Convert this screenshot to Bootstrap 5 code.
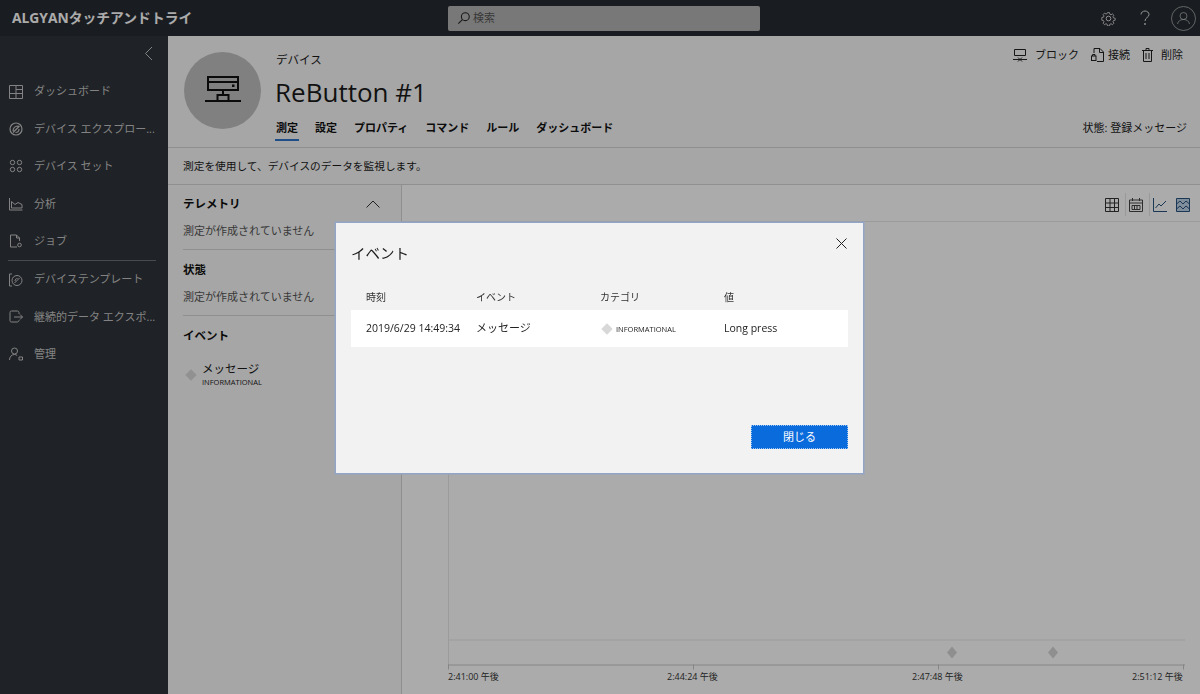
<!DOCTYPE html>
<html lang="ja">
<head>
    <meta charset="UTF-8">
    <meta name="viewport" content="width=device-width, initial-scale=1.0">
    <title>ReButton #1</title>
    <link href="https://cdn.jsdelivr.net/npm/bootstrap@5.3.0/dist/css/bootstrap.min.css" rel="stylesheet">
    <style>
        html, body { height: 100%; overflow: hidden; }
        body {
            font-family: "Open Sans", "Noto Sans CJK JP", sans-serif;
            font-size: 11px;
            color: #1a1a1a;
            background: #f8f8f8;
        }
        svg { display: block; }
        .app-top { height: 36px; background: #262a30; padding: 0 4px 0 12px; flex-wrap: nowrap; }
        .app-brand { color: #fff; font-size: 13.8px; font-weight: 700; width: 436px; white-space: nowrap; }
        .app-search { width: 312px; height: 25px; background: #b4b4b4; border-radius: 2px; padding: 0 9px; color: #555; font-size: 11px; gap: 2px; }
        .app-top-icons { margin-left: auto; color: #ddd; gap: 20px; }
        .top-gear { margin-right: 3px; }
        .top-user { stroke-opacity: .6; }
        .app-body { height: 658px; }
        .app-side { width: 168px; flex: none; background: #2f3339; color: #c4c4c4; }
        .side-toggle { height: 37px; padding: 0 15px 2px 0; }
        .side-nav .nav-link { height: 37.4px; padding: 0 9px; color: #c4c4c4; font-size: 11px; gap: 11px; white-space: nowrap; }
        .side-rule { height: 1px; background: #6d6f73; margin: 0 12px 0 8px; }
        .app-main { background: #f8f8f8; min-width: 0; }
        .dev-head { height: 112px; border-bottom: 1px solid #d6d6d6; padding: 16px 13px 0 16px; }
        .dev-avatar { width: 77px; height: 77px; border-radius: 50%; background: #bfbfbf; color: #111; flex: none; }
        .dev-info { margin-left: 14px; }
        .dev-kicker { font-size: 11.5px; line-height: 16px; margin-bottom: 6px; padding-left: 1px; }
        .dev-title { font-size: 26px; line-height: 36px; font-weight: 400; margin: 0 0 10px; }
        .dev-tabs { gap: 15px; }
        .dev-tabs .nav-link { padding: 0 1px 3px; color: #111; font-weight: 700; font-size: 11px; line-height: 16px; border-bottom: 2px solid transparent; }
        .dev-tabs .nav-link.active { border-bottom-color: #2f74c9; }
        .dev-actions { gap: 12px; color: #222; margin: -5px 4px 0 0; }
        .dev-status { font-size: 11px; margin-top: 56px; }
        .dev-note { height: 37px; padding: 0 15px; border-bottom: 1px solid #d6d6d6; font-size: 10.7px; }
        .meas-col { width: 234px; flex: none; padding: 0 15px; border-right: 1px solid #d6d6d6; }
        .meas-sec { border-bottom: 1px solid #d6d6d6; height: 66px; padding-top: 11px; }
        .meas-sec:first-child { height: 65px; padding-top: 10px; }
        .meas-name { font-weight: 700; font-size: 11.5px; line-height: 18px; margin-bottom: 10px; color: #111; }
        .meas-empty { color: #555; font-size: 11px; line-height: 16px; }
        .meas-gap { margin-top: 10px; }
        .meas-chev { margin-right: 6px; }
        .meas-last { padding-top: 11px; }
        .meas-event { gap: 7px; padding: 7px 3px; margin-left: 1px; }
        .evt-name { font-size: 11.5px; line-height: 14px; margin-bottom: 1px; }
        .tiny-caps { font-size: 7.5px; line-height: 10px; }
        .evt-dot { width: 8px; height: 8px; background: #d8d8d8; transform: rotate(45deg); flex: none; }
        .chart-col { background: #fff; min-width: 0; }
        .chart-tools { height: 37px; border-bottom: 1px solid #e8e8e8; padding: 3px 10px 0; }
        .tool-sep { width: 1px; height: 23px; background: #e4e4e4; margin: 0 3px 0 6px; }
        .tool-last { margin-left: 9px; }
        .chart-text { font-family: "Open Sans", "Noto Sans CJK JP", sans-serif; font-size: 9px; fill: #333; }
        .modal { --bs-modal-width: 529px; }
        .modal-backdrop { --bs-backdrop-opacity: .33; }
        .modal-dialog.evt-dialog { margin: 222px 0 0 335px; }
        .evt-dialog .modal-content { height: 252px; background: #f2f2f2; background-clip: border-box; border: 1px solid #93a5c5; border-radius: 0; box-shadow: 0 0 0 1px rgba(147, 165, 197, .55); }
        .evt-dialog .modal-header { border: 0; padding: 21px 15px 0; align-items: flex-start; }
        .evt-title { font-size: 14.5px; font-weight: 400; line-height: 18px; margin-top: 1px; }
        .evt-close { color: #222; background: none; border: 0; padding: 0; margin: -6px 1px 0 auto; }
        .evt-dialog .modal-body { padding: 27px 15px 0; }
        .evt-table { margin: 0; table-layout: fixed; --bs-table-bg: transparent; }
        .evt-table th { font-size: 10px; font-weight: 400; padding: 0 0 6px 15px; border: 0; line-height: 14px; color: #333; }
        .evt-table td { font-size: 11px; background: #fff; padding: 0 0 0 15px; height: 37px; vertical-align: middle; border: 0; color: #222; white-space: nowrap; }
        .evt-table td.evt-latin { font-size: 10.5px; }
        .evt-cat { gap: 5px; margin-left: 3px; }
        .evt-dialog .modal-footer { border: 0; padding: 0 15px 24px; }
        .evt-btn { width: 97px; height: 24px; margin: 0; padding: 0; font-size: 11px; background: #0a6bdc; border: 1px dotted #9cc4f2; border-radius: 0; color: #fff; }
    </style>
</head>
<body>
    <nav class="navbar app-top">
        <div class="app-brand">ALGYANタッチアンドトライ</div>
        <div class="app-search d-flex align-items-center">
            <svg width="14" height="14" viewBox="0 0 16 16" fill="none" stroke="#222" stroke-width="1.2"><circle cx="9.500" cy="6.500" r="4.500"/><path d="M6.200 9.800 1.500 14.500"/></svg>
            <span>検索</span>
        </div>
        <div class="app-top-icons d-flex align-items-center">
            <svg class="top-gear" width="15" height="15" viewBox="0 0 16 16" fill="none" stroke="currentColor" stroke-width="1"><circle cx="8" cy="8" r="2.500"/><path d="M6.800 1h2.400l.4 2 1.400.6 1.700-1.100 1.700 1.700-1.100 1.700.6 1.400 2 .4v2.400l-2 .4-.6 1.400 1.100 1.700-1.700 1.700-1.700-1.100-1.400.6-.4 2H6.800l-.4-2-1.400-.6-1.700 1.100-1.700-1.700 1.100-1.700-.6-1.400-2-.4V6.800l2-.4.6-1.400-1.100-1.700 1.700-1.700 1.700 1.100 1.400-.6z" transform="translate(.8 .8) scale(.9)"/></svg>
            <svg width="12" height="16" viewBox="0 0 12 16" fill="none" stroke="currentColor" stroke-width="1"><path d="M2 4.500C2 2.500 3.800 1 6 1s4 1.500 4 3.500c0 3-4 3-4 6.500"/><circle cx="6" cy="14" r=".6"/></svg>
            <svg class="top-user" width="25" height="25" viewBox="0 0 25 25" fill="none" stroke="currentColor" stroke-width="1"><circle cx="12.500" cy="12.500" r="12"/><circle cx="12.500" cy="10" r="3.500"/><path d="M6.500 18c.5-3 3-4.500 6-4.500s5.500 1.500 6 4.500"/></svg>
        </div>
    </nav>

    <div class="app-body d-flex">
        <aside class="app-side">
            <div class="side-toggle d-flex align-items-center justify-content-end">
                <svg width="9" height="15" viewBox="0 0 9 15" fill="none" stroke="currentColor" stroke-width="1"><path d="M8 1 1.500 7.500 8 14"/></svg>
            </div>
            <nav class="side-nav nav flex-column">
                <a class="nav-link d-flex align-items-center" href="#">
                    <svg width="14" height="14" viewBox="0 0 14 14" fill="none" stroke="currentColor"><path d="M.5.5h13v13H.5zM7 .5v8M7 4.500h6.500M.5 8.500h13M7 8.500v5"/></svg>
                    <span>ダッシュボード</span>
                </a>
                <a class="nav-link d-flex align-items-center" href="#">
                    <svg width="14" height="14" viewBox="0 0 14 14" fill="none" stroke="currentColor" stroke-width="1.200"><circle cx="7" cy="7" r="6"/><path d="M4 9c0-3 2-5 6-5M4 10.500l6.500-6.500M10 7c0 2-1.500 3.500-3.500 3.500"/></svg>
                    <span>デバイス エクスプロー...</span>
                </a>
                <a class="nav-link d-flex align-items-center" href="#">
                    <svg width="14" height="14" viewBox="0 0 14 14" fill="none" stroke="currentColor"><circle cx="3.500" cy="3.500" r="2.200"/><circle cx="10.500" cy="3.500" r="2.200"/><circle cx="3.500" cy="10.500" r="2.200"/><circle cx="10.500" cy="10.500" r="2.200"/></svg>
                    <span>デバイス セット</span>
                </a>
                <a class="nav-link d-flex align-items-center" href="#">
                    <svg width="14" height="14" viewBox="0 0 14 14" fill="none" stroke="currentColor"><path d="M.5 1v12h13M2.500 11V4.500L6 7.500l3-2 4 2v3.500z"/></svg>
                    <span>分析</span>
                </a>
                <a class="nav-link d-flex align-items-center" href="#">
                    <svg width="14" height="14" viewBox="0 0 14 14" fill="none" stroke="currentColor"><path d="M8 13H1.500V1h6l3 3v3"/><path d="M7.500 1v3h3"/><circle cx="10.500" cy="11" r="1.800"/></svg>
                    <span>ジョブ</span>
                </a>
                <div class="side-rule"></div>
                <a class="nav-link d-flex align-items-center" href="#">
                    <svg width="14" height="14" viewBox="0 0 14 14" fill="none" stroke="currentColor"><path d="M3 1H.5v12H3"/><circle cx="8" cy="7.500" r="5"/><path d="m10.500 5-5 5M6 8c0-1.500 1-2.500 2.500-2.500"/></svg>
                    <span>デバイステンプレート</span>
                </a>
                <a class="nav-link d-flex align-items-center" href="#">
                    <svg width="14" height="14" viewBox="0 0 14 14" fill="none" stroke="currentColor"><path d="M10 4V2.500c0-1-1-1.500-2-1.500H2.500C1.500 1 1 1.500 1 2.500v8c0 1 .5 1.500 1.500 1.500H8c1 0 2-.5 2-1.500V10"/><path d="M5 7h8.500M11 4.500 13.500 7 11 9.500"/></svg>
                    <span>継続的データ エクスポ...</span>
                </a>
                <a class="nav-link d-flex align-items-center" href="#">
                    <svg width="14" height="14" viewBox="0 0 14 14" fill="none" stroke="currentColor"><circle cx="5.500" cy="4" r="3"/><path d="M.5 13c0-3 2-5.500 5-5.500 1 0 2 .3 2.700 1"/><path d="M10 10h3.500v3H10z"/></svg>
                    <span>管理</span>
                </a>
            </nav>
        </aside>

        <main class="app-main flex-grow-1 d-flex flex-column">
            <header class="dev-head d-flex">
                <div class="dev-avatar d-flex align-items-center justify-content-center">
                    <svg width="36" height="30" viewBox="0 0 36 30" fill="none" stroke="currentColor" stroke-width="2"><path d="M3 1h30v13H3zM3 6h30"/><path d="M18 14v5M12.500 25v-6h11v6zM0 25h36"/><rect x="27" y="8.500" width="2.500" height="2.500" fill="currentColor" stroke="none"/></svg>
                </div>
                <div class="dev-info flex-grow-1">
                    <div class="dev-kicker">デバイス</div>
                    <h1 class="dev-title">ReButton #1</h1>
                    <nav class="dev-tabs nav">
                        <a class="nav-link active" href="#">測定</a>
                        <a class="nav-link" href="#">設定</a>
                        <a class="nav-link" href="#">プロパティ</a>
                        <a class="nav-link" href="#">コマンド</a>
                        <a class="nav-link" href="#">ルール</a>
                        <a class="nav-link" href="#">ダッシュボード</a>
                    </nav>
                </div>
                <div class="d-flex flex-column align-items-end">
                    <div class="dev-actions d-flex align-items-center">
                        <span class="d-flex align-items-center gap-2">
                            <svg width="14" height="13" viewBox="0 0 14 13" fill="none" stroke="currentColor"><path d="M1.500.5h11v6h-11zM0 10.500h14M5 8.500l4 4M9 8.500l-4 4"/></svg>
                            ブロック
                        </span>
                        <span class="d-flex align-items-center gap-1">
                            <svg width="13" height="14" viewBox="0 0 13 14" fill="none" stroke="currentColor"><path d="M3 5V.5h6l3.500 3.500v9.500H6"/><path d="M8.500.5v4h4"/><rect x=".5" y="8" width="4.500" height="4.500"/><path d="M1.500 8V6.500h2.500V8"/></svg>
                            接続
                        </span>
                        <span class="d-flex align-items-center gap-2">
                            <svg width="11" height="14" viewBox="0 0 11 14" fill="none" stroke="currentColor"><path d="M1.500 2.500v11h8v-11M0 2.500h11M4 2.500V.5h3v2M4 5v6M7 5v6"/></svg>
                            削除
                        </span>
                    </div>
                    <div class="dev-status">状態: 登録メッセージ</div>
                </div>
            </header>

            <div class="dev-note d-flex align-items-center">測定を使用して、デバイスのデータを監視します。</div>

            <div class="d-flex flex-grow-1">
                <section class="meas-col">
                    <div class="meas-sec">
                        <div class="d-flex justify-content-between align-items-center">
                            <div class="meas-name mb-0">テレメトリ</div>
                            <svg class="meas-chev" width="14" height="8" viewBox="0 0 14 8" fill="none" stroke="#333"><path d="m.5 7.500 6.500-6.500 6.500 6.500"/></svg>
                        </div>
                        <div class="meas-empty meas-gap">測定が作成されていません</div>
                    </div>
                    <div class="meas-sec">
                        <div class="meas-name">状態</div>
                        <div class="meas-empty">測定が作成されていません</div>
                    </div>
                    <div class="meas-last">
                        <div class="meas-name">イベント</div>
                        <div class="meas-event d-flex align-items-center">
                            <div class="evt-dot"></div>
                            <div>
                                <div class="evt-name">メッセージ</div>
                                <div class="tiny-caps">INFORMATIONAL</div>
                            </div>
                        </div>
                    </div>
                </section>

                <section class="chart-col flex-grow-1 d-flex flex-column">
                    <div class="chart-tools d-flex align-items-center justify-content-end">
                        <svg width="14" height="14" viewBox="0 0 14 14" fill="none" stroke="#333"><path d="M.5.5h13v13H.5zM.5 5h13M.5 9.500h13M5 .5v13M9.500 .5v13"/></svg>
                        <div class="tool-sep"></div>
                        <svg width="14" height="14" viewBox="0 0 14 14" fill="none" stroke="#444"><path d="M.5 2h13v11.500H.5zM.5 5h13M3.500 0v3M10.500 0v3M3 7.500h8v4H3zM5.500 7.500v4M8 7.500v4"/></svg>
                        <div class="tool-sep"></div>
                        <svg width="14" height="14" viewBox="0 0 14 14" fill="none" stroke="#27527f"><path d="M.5 0v13.500H14M2.500 10 6 6l2 2 5-5"/></svg>
                        <svg class="tool-last" width="14" height="14" viewBox="0 0 14 14" fill="#bfd2e6" stroke="#27527f"><path d="M.5.5h13v13H.5z"/><path d="M.5 6 4 3l3 3 3-3 3.500 3M.5 11 4 8l3 3 3-3 3.500 3" fill="none"/></svg>
                    </div>
                    <svg class="flex-grow-1" width="798" height="471" viewBox="402 223 798 471">
                        <path d="M448.500 223v443M448 640.500h737" stroke="#e8e8e8" fill="none"/>
                        <path d="M448 665.500h737M448.500 665v5M693.500 665v5M938.500 665v5M1183.500 665v5" stroke="#c8c8c8" fill="none"/>
                        <path d="M952 647l5 6-5 6-5-6zM1053 647l5 6-5 6-5-6z" fill="#d5d5d5"/>
                        <text class="chart-text" x="448" y="680">2:41:00 午後</text>
                        <text class="chart-text" x="667" y="680">2:44:24 午後</text>
                        <text class="chart-text" x="912" y="680">2:47:48 午後</text>
                        <text class="chart-text" x="1132" y="680">2:51:12 午後</text>
                    </svg>
                </section>
            </div>
        </main>
    </div>

    <div class="modal-backdrop show"></div>
    <div class="modal d-block" tabindex="-1">
        <div class="modal-dialog evt-dialog">
            <div class="modal-content">
                <div class="modal-header">
                    <h5 class="modal-title evt-title">イベント</h5>
                    <button type="button" class="evt-close" aria-label="閉じる">
                        <svg width="11" height="11" viewBox="0 0 11 11" fill="none" stroke="currentColor"><path d="m.5.5 10 10M10.500.5l-10 10"/></svg>
                    </button>
                </div>
                <div class="modal-body">
                    <table class="table evt-table">
                        <colgroup><col width="110"><col width="124"><col width="124"><col></colgroup>
                        <thead>
                            <tr><th>時刻</th><th>イベント</th><th>カテゴリ</th><th>値</th></tr>
                        </thead>
                        <tbody>
                            <tr>
                                <td class="evt-latin">2019/6/29 14:49:34</td>
                                <td>メッセージ</td>
                                <td><span class="evt-cat d-flex align-items-center"><span class="evt-dot"></span><span class="tiny-caps">INFORMATIONAL</span></span></td>
                                <td class="evt-latin">Long press</td>
                            </tr>
                        </tbody>
                    </table>
                </div>
                <div class="modal-footer">
                    <button type="button" class="btn btn-primary evt-btn">閉じる</button>
                </div>
            </div>
        </div>
    </div>

    <script src="https://cdn.jsdelivr.net/npm/bootstrap@5.3.0/dist/js/bootstrap.bundle.min.js"></script>
</body>
</html>
